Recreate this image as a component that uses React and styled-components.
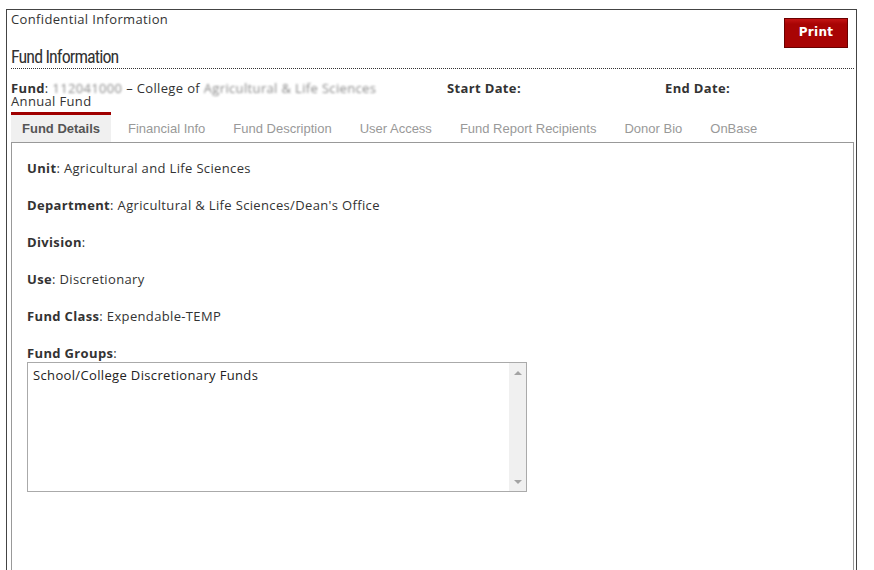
import React from 'react'
import { styled, createGlobalStyle } from 'styled-components'

const GlobalStyle = createGlobalStyle`
    body {
        margin:0;
        background:white;
        font-family:"Open Sans", "DejaVu Sans", sans-serif;
        font-size:13px;
        letter-spacing:0.35px;
        color:#333;
    }
`
const Page = styled.div`
    padding:9px 17px 0 6px;
    height:570px;
    box-sizing:border-box;
    overflow:hidden;
`
const Frame = styled.div`
    border:1px solid #444;
    border-bottom:none;
    padding:0 2px 0 4px;
    height:100%;
    box-sizing:border-box;
    display:flex;
    flex-direction:column;
`
const Header = styled.div`
    display:flex;
    justify-content:space-between;
    align-items:flex-start;
`
const HeaderText = styled.div`
    display:flex;
    flex-direction:column;
`
const Confidential = styled.div`
    line-height:18px;
    color:#333;
`
const Heading = styled.h2`
    margin:18px 0 0;
    font-family:"Liberation Sans Narrow", "Roboto Condensed", "Liberation Sans", sans-serif;
    font-weight:normal;
    font-size:18px;
    line-height:22px;
    color:#333;
    letter-spacing:-0.9px;
`
const PrintButton = styled.button`
    margin:8px 6px 0 0;
    width:64px;
    height:30px;
    background:linear-gradient(#c41414, #a80404 18%, #a80404);
    border:1px solid #6a0000;
    color:white;
    font-family:"DejaVu Sans", "Open Sans", sans-serif;
    font-weight:bold;
    font-size:12px;
    letter-spacing:0.3px;
    padding:0 0 2px;
    cursor:pointer;
`
const Divider = styled.div`
    border-bottom:1px dotted #333;
`
const FundRow = styled.div`
    display:grid;
    grid-template-columns:436px 218px 1fr;
    margin-top:13px;
    line-height:13px;
`
const Label = styled.b`
    font-weight:bold;
    color:#333;
`
const Blur = styled.span`
    color:#8a8a8a;
    filter:blur(1.1px);
`
const Tabs = styled.div`
    display:flex;
    margin-top:4px;
`
const Tab = styled.div`
    height:27px;
    line-height:28px;
    padding:0 11px;
    margin-right:6px;
    font-family:"Liberation Sans", Arial, sans-serif;
    font-size:13px;
    letter-spacing:0;
    color:${p => p.$active ? '#555' : '#999'};
    font-weight:${p => p.$active ? 'bold' : 'normal'};
    background:${p => p.$active ? '#f0f0f0' : 'transparent'};
    border-top:3px solid ${p => p.$active ? '#a00000' : 'transparent'};
    white-space:nowrap;
`
const Panel = styled.div`
    flex:1;
    border:1px solid #999;
    border-bottom:none;
    padding:16px 15px 0;
`
const Field = styled.div`
    line-height:18px;
    margin-bottom:19px;
`
const GroupLabel = styled.div`
    line-height:18px;
`
const ListBox = styled.div`
    width:500px;
    height:130px;
    border:1px solid #aaa;
    box-sizing:border-box;
    display:flex;
`
const ListItems = styled.div`
    flex:1;
    padding:3px 5px;
    line-height:18px;
    color:#222;
`
const ScrollTrack = styled.div`
    width:17px;
    background:#f0f0f0;
    display:flex;
    flex-direction:column;
    justify-content:space-between;
    align-items:center;
    padding:8px 0 7px;
`
const Arrow = styled.div`
    width:0;
    height:0;
    border-left:4px solid transparent;
    border-right:4px solid transparent;
    ${p => p.$up ? 'border-bottom:4px solid #a3a3a3;' : 'border-top:4px solid #a3a3a3;'}
`

const tabs = ['Fund Details', 'Financial Info', 'Fund Description', 'User Access', 'Fund Report Recipients', 'Donor Bio', 'OnBase']

const fields = [
    ['Unit', 'Agricultural and Life Sciences'],
    ['Department', 'Agricultural & Life Sciences/Dean\'s Office'],
    ['Division', ''],
    ['Use', 'Discretionary'],
    ['Fund Class', 'Expendable-TEMP'],
]

const App = () => {
  return (
    <Page>
        <GlobalStyle />
        <Frame>
            <Header>
                <HeaderText>
                    <Confidential>Confidential Information</Confidential>
                    <Heading>Fund Information</Heading>
                </HeaderText>
                <PrintButton>Print</PrintButton>
            </Header>
            <Divider />
            <FundRow>
                <div>
                    <Label>Fund</Label>: <Blur>112041000</Blur> – College of <Blur>Agricultural &amp; Life Sciences</Blur>
                    <br />Annual Fund
                </div>
                <div><Label>Start Date:</Label></div>
                <div><Label>End Date:</Label></div>
            </FundRow>
            <Tabs>
                {tabs.map((t, i) => <Tab key={t} $active={i === 0}>{t}</Tab>)}
            </Tabs>
            <Panel>
                {fields.map(([k, v]) => (
                    <Field key={k}><Label>{k}</Label>: {v}</Field>
                ))}
                <GroupLabel><Label>Fund Groups</Label>:</GroupLabel>
                <ListBox>
                    <ListItems>School/College Discretionary Funds</ListItems>
                    <ScrollTrack>
                        <Arrow $up />
                        <Arrow />
                    </ScrollTrack>
                </ListBox>
            </Panel>
        </Frame>
    </Page>
  )
}

export default App
